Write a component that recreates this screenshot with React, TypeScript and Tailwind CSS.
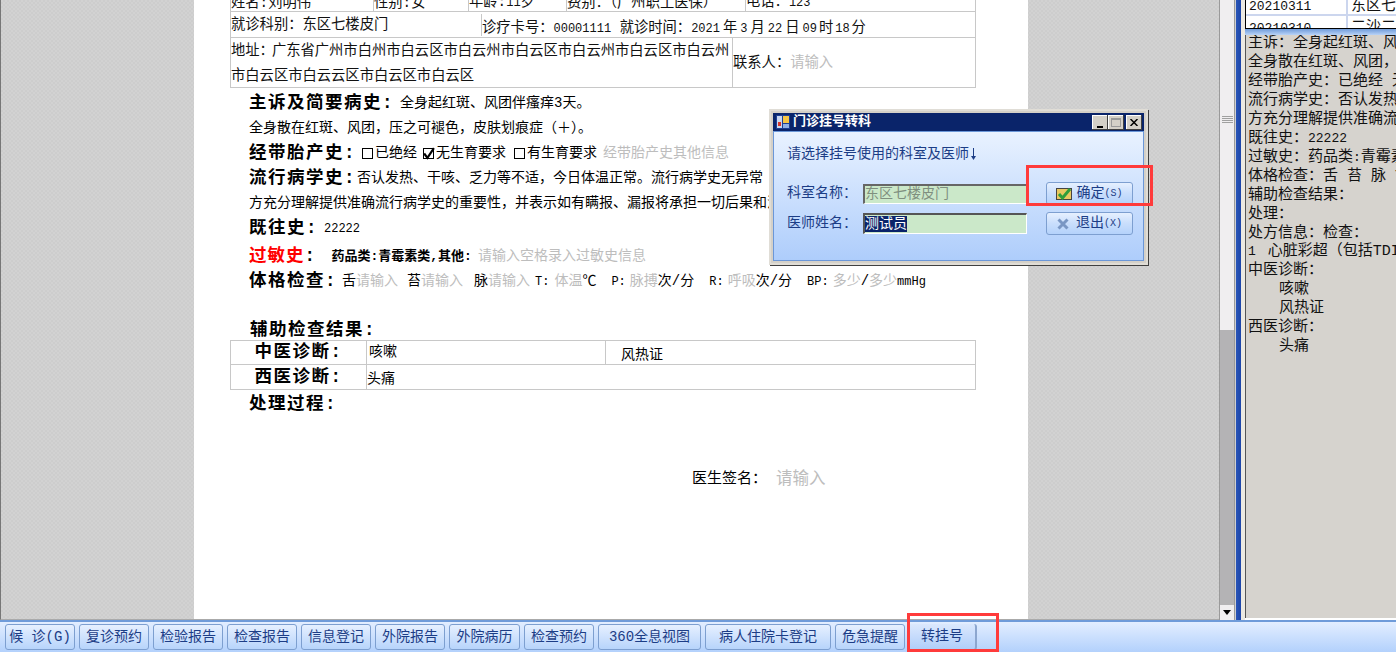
import type { ReactNode } from 'react';

// 门诊挂号转科 — old WinForms style clinic screen

const bottomButtons = [
  { label: '候 诊(G)', w: 'w-[70px]' },
  { label: '复诊预约', w: 'w-[70px]' },
  { label: '检验报告', w: 'w-[70px]' },
  { label: '检查报告', w: 'w-[70px]' },
  { label: '信息登记', w: 'w-[70px]' },
  { label: '外院报告', w: 'w-[70px]' },
  { label: '外院病历', w: 'w-[71px]' },
  { label: '检查预约', w: 'w-[70px]' },
  { label: '360全息视图', w: 'w-[103px]' },
  { label: '病人住院卡登记', w: 'w-[126px]' },
  { label: '危急提醒', w: 'w-[70px]' },
];

const sideLines: { id: string; text: ReactNode; indent?: boolean }[] = [
  { id: 'zs', text: '主诉：全身起红斑、风团伴瘙痒3天。' },
  { id: 'ss', text: '全身散在红斑、风团，压之可褪色' },
  { id: 'jd', text: '经带胎产史：已绝经 无生育要求' },
  { id: 'lx', text: '流行病学史：否认发热、干咳、乏力' },
  { id: 'ff', text: '方充分理解提供准确流行病学史的重要性' },
  { id: 'jw', text: <>既往史：<span className="text-[13px]">22222</span></> },
  { id: 'gm', text: <>过敏史：药品类<span className="text-[13px]">:</span>青霉素类</> },
  { id: 'tg', text: '体格检查：舌 苔 脉 T：体温' },
  { id: 'fz', text: '辅助检查结果：' },
  { id: 'cl', text: '处理：' },
  { id: 'cf', text: '处方信息：检查：' },
  { id: 'xz', text: <><span className="mr-[12px] text-[13px]">1</span>心脏彩超（包括TDI）</> },
  { id: 'zy', text: '中医诊断：' },
  { id: 'ks', text: '咳嗽', indent: true },
  { id: 'fr', text: '风热证', indent: true },
  { id: 'xy', text: '西医诊断：' },
  { id: 'tt', text: '头痛', indent: true },
];

function Num({ children }: { children: ReactNode }) {
  return <span className="text-[12px]">{children}</span>;
}

function Hint({ children, className = '' }: { children: ReactNode; className?: string }) {
  return <span className={`text-[#bdbdbd] ${className}`}>{children}</span>;
}

function Heading({ children }: { children: ReactNode }) {
  return <span className="text-[17.5px] font-bold tracking-[1.5px] text-black">{children}</span>;
}

function Line({ children, className = '' }: { children: ReactNode; className?: string }) {
  return <div className={`flex h-[25px] items-center whitespace-pre text-[14px] text-black ${className}`}>{children}</div>;
}

function Box({ checked, className = 'ml-[6px]' }: { checked?: boolean; className?: string }) {
  return (
    <span className={`mr-[2px] inline-flex h-[11px] w-[11px] items-center justify-center border border-black ${className}`}>
      {checked && (
        <svg viewBox="0 0 12 12" className="h-[13px] w-[13px] overflow-visible">
          <path d="M2 6l3 4 6-9" fill="none" stroke="#000" strokeWidth="2" />
        </svg>
      )}
    </span>
  );
}

function Document() {
  return (
    <div className="h-full w-[834px] overflow-hidden bg-white pl-[36px]">
      <div className="w-[746px] border-x border-b border-[#c8c8c8] text-[14.3px] text-[#111]">
        <div className="flex h-[12px] items-end overflow-hidden border-b border-[#c8c8c8] leading-[14px] whitespace-nowrap">
          <div className="w-[142px] pb-[1px]">姓名:刘明伟</div>
          <div className="w-[95px] border-l border-[#c8c8c8] pb-[1px]">性别:女</div>
          <div className="w-[98px] border-l border-[#c8c8c8] pb-[1px]">年龄:<Num>11</Num>岁</div>
          <div className="w-[179px] border-l border-[#c8c8c8] pb-[1px]">费别：（广州职工医保）</div>
          <div className="flex-1 border-l border-[#c8c8c8] pb-[1px]">电话：<Num>123</Num></div>
        </div>
        <div className="flex h-[26px] items-center border-b border-[#c8c8c8] pt-[3px] whitespace-nowrap">
          <div className="w-[250px]">就诊科别：东区七楼皮门</div>
          <div className="-mt-[3px] h-full flex-1 border-l border-[#c8c8c8] pt-[2px] leading-[24px]">
            诊疗卡号：<Num>00001111</Num>&nbsp;就诊时间：<Num>2021</Num>
            <span className="mx-[3px]">年</span><Num>3</Num>
            <span className="mx-[3px]">月</span><Num>22</Num>
            <span className="mx-[3px]">日</span><Num>09</Num>
            <span className="mx-[2px]">时</span><Num>18</Num>
            <span className="ml-[2px]">分</span>
          </div>
        </div>
        <div className="flex h-[49px] items-center">
          <div className="w-[501px] pt-[3px] leading-[25px] whitespace-nowrap">
            <div>地址：<span className="-ml-[2px]">广东省广州市白州市白云区市白云州市白云区市白云州市白云区市白云州</span></div>
            <div>市白云区市白云云区市白云区市白云区</div>
          </div>
          <div className="flex h-full flex-1 items-center border-l border-[#c8c8c8] pt-[3px] whitespace-nowrap">
            联系人：<Hint>请输入</Hint>
          </div>
        </div>
      </div>

      <div className="pl-[19px]">
        <Line className="mt-[3px]"><Heading>主诉及简要病史:</Heading><span className="ml-[6px]">全身起红斑、风团伴瘙痒3天。</span></Line>
        <Line>全身散在红斑、风团，压之可褪色，皮肤划痕症（＋）。</Line>
        <Line>
          <Heading>经带胎产史:</Heading>
          <Box />已绝经<Box checked />无生育要求<Box className="ml-[8px]" />有生育要求
          <Hint className="ml-[6px]">经带胎产史其他信息</Hint>
        </Line>
        <Line><Heading>流行病学史:</Heading><span className="ml-[1px]">否认发热、干咳、乏力等不适，今日体温正常。流行病学史无异常</span></Line>
        <Line>方充分理解提供准确流行病学史的重要性，并表示如有瞒报、漏报将承担一切后果和法律责任</Line>
        <Line><Heading>既往史:</Heading><span className="ml-[6px] text-[12px]">22222</span></Line>
        <Line className="mt-[3px]">
          <span className="text-[17.5px] font-bold tracking-[1px] text-[#ff0000]">过敏史</span>
          <Heading>:</Heading>
          <span className="ml-[15px] text-[13px] font-bold">药品类:青霉素类,其他:</span>
          <Hint className="ml-[6px]">请输入空格录入过敏史信息</Hint>
        </Line>
        <Line>
          <Heading>体格检查:</Heading>
          <span className="ml-[5px]">舌</span><Hint>请输入</Hint>
          <span className="ml-[9px]">苔</span><Hint>请输入</Hint>
          <span className="ml-[11px]">脉</span><Hint>请输入</Hint>
          <Num><span className="ml-[5px]">T:</span></Num><Hint className="ml-[5px]">体温</Hint>℃
          <Num><span className="ml-[15px]">P:</span></Num><Hint className="ml-[4px]">脉搏</Hint>次/分
          <Num><span className="ml-[15px]">R:</span></Num><Hint className="ml-[4px]">呼吸</Hint>次/分
          <Num><span className="ml-[15px]">BP:</span></Num><Hint className="ml-[4px]">多少</Hint>/<Hint>多少</Hint>
          <Num>mmHg</Num>
        </Line>
        <div className="h-[26px]" />
        <div className="flex h-[20px] items-center pl-[1px]"><Heading>辅助检查结果:</Heading></div>
      </div>

      <div className="w-[746px] border border-[#c8c8c8] text-[14px] text-black">
        <div className="flex h-[24px] border-b border-[#c8c8c8]">
          <div className="flex w-[135px] items-center justify-center"><Heading>中医诊断:</Heading></div>
          <div className="w-[239px] border-l border-[#c8c8c8] pl-[2px] leading-[22px]">咳嗽</div>
          <div className="flex-1 border-l border-[#c8c8c8] pt-[5px] pl-[15px] leading-[18px]">风热证</div>
        </div>
        <div className="flex h-[24px]">
          <div className="flex w-[135px] items-center justify-center"><Heading>西医诊断:</Heading></div>
          <div className="flex-1 border-l border-[#c8c8c8] pt-[4px] leading-[20px]">头痛</div>
        </div>
      </div>

      <div className="pl-[19px]">
        <Line className="mt-[2px]"><Heading>处理过程:</Heading></Line>
        <div className="mt-[51px] flex h-[25px] items-center pl-[443px] text-[15px] whitespace-nowrap text-black">
          医生签名：<Hint className="ml-[9px] text-[16.5px]">请输入</Hint>
        </div>
      </div>
    </div>
  );
}

function Scrollbar() {
  return (
    <div className="flex h-full w-[16px] flex-col border-x border-[#9a9a9a] bg-[#b4b3b5]">
      <div className="flex h-[330px] flex-col items-center bg-[#f0eef0] pt-[116px]">
        <div className="flex w-[11px] flex-col gap-[1px]">
          <div className="h-px bg-[#a0a0a0]" />
          <div className="h-px bg-[#a0a0a0]" />
          <div className="h-px bg-[#a0a0a0]" />
          <div className="h-px bg-[#a0a0a0]" />
        </div>
      </div>
      <div className="flex-1" />
      <div className="flex h-[15px] items-center justify-center bg-[#f0eef0]">
        <svg viewBox="0 0 8 5" className="h-[5px] w-[8px]">
          <path d="M0 0h8L4 5z" fill="#000" />
        </svg>
      </div>
    </div>
  );
}

function SidePanel() {
  return (
    <div className="flex h-full flex-1 flex-col overflow-hidden border-b-2 border-white">
      <div className="h-[29px] overflow-hidden border-b border-l border-black bg-white text-[15px] text-[#111]">
        <div className="flex h-[16px] border-b-2 border-[#ccd6ee] leading-[13px] whitespace-nowrap">
          <div className="w-[100px] pl-[3px] text-[13px]">20210311</div>
          <div className="flex-1 border-l-2 border-[#ccd6ee] pl-[3px]">东区七</div>
        </div>
        <div className="flex h-[24px] whitespace-nowrap">
          <div className="w-[100px] pt-[6px] pl-[3px] text-[13px] leading-[14px]">20210310</div>
          <div className="flex-1 border-l-2 border-[#ccd6ee] pt-[5px] pl-[3px] leading-[14px]">二沙二</div>
        </div>
      </div>
      <div className="h-[6px] bg-gradient-to-b from-[#6f9bd9] to-[#b9d3f7]" />
      <div className="flex-1 overflow-hidden border-l border-[#555] bg-[#d6d3ce] pl-[2px] text-[15px] leading-[18.95px] whitespace-nowrap text-[#111]">
        {sideLines.map((line) => (
          <div key={line.id} className={line.indent ? 'pl-[31px]' : ''}>{line.text}</div>
        ))}
      </div>
    </div>
  );
}

function DialogButton({ icon, label, hotkey }: { icon: ReactNode; label: string; hotkey: string }) {
  return (
    <button className="flex h-[23px] w-[87px] items-center justify-center rounded-[3px] border border-[#7d9fd0] bg-gradient-to-b from-[#e6f0ff] via-[#c9defc] to-[#b4d2fb] text-[14px] text-[#1c3d86]">
      {icon}
      <span className="ml-[4px]">{label}</span>
      <span className="text-[10px]">({hotkey})</span>
    </button>
  );
}

function Dialog() {
  return (
    <div className="absolute top-[109px] left-[769px] flex h-[156px] w-[379px] flex-col border-2 border-[#e0ddd6] bg-[#d4d0c8] p-[2px] text-[14px] shadow-[1px_1px_0_#404040]">
      <div className="flex h-[18px] shrink-0 items-center justify-between bg-[#0a246a] pr-[2px] pl-[3px]">
        <div className="flex items-center gap-[3px] text-[13px] font-bold text-white">
          <svg viewBox="0 0 14 14" className="h-[14px] w-[14px]">
            <rect width="14" height="14" fill="#1c3f94" />
            <rect x="1" y="1" width="5" height="12" fill="#c9d6ef" />
            <rect x="2" y="7" width="3" height="4" fill="#d8352a" />
            <rect x="7" y="1" width="6" height="7" fill="#f6c544" />
            <rect x="7" y="9" width="6" height="4" fill="#8fb0e6" />
          </svg>
          门诊挂号转科
        </div>
        <div className="flex">
          <div className="flex h-[15px] w-[16px] items-end justify-center bg-[#d4d0c8] pb-[2px] shadow-[inset_-1px_-1px_0_#404040,inset_1px_1px_0_#fff]">
            <div className="h-[2px] w-[6px] bg-black" />
          </div>
          <div className="flex h-[15px] w-[16px] items-center justify-center bg-[#d4d0c8] shadow-[inset_-1px_-1px_0_#404040,inset_1px_1px_0_#fff]">
            <div className="h-[9px] w-[10px] border border-t-2 border-[#9a9a9a]" />
          </div>
          <div className="ml-[2px] flex h-[15px] w-[16px] items-center justify-center bg-[#d4d0c8] shadow-[inset_-1px_-1px_0_#404040,inset_1px_1px_0_#fff]">
            <svg viewBox="0 0 8 7" className="h-[7px] w-[8px]">
              <path d="M0.5 0l7 7M7.5 0l-7 7" stroke="#000" strokeWidth="1.5" />
            </svg>
          </div>
        </div>
      </div>
      <div className="flex-1 border border-[#6b97d8] bg-gradient-to-b from-[#e9f2ff] to-[#aecdfb] pt-[12px] pl-[13px] text-[#1c3d86]">
        <div className="flex h-[20px] items-center">
          请选择挂号使用的科室及医师
          <svg viewBox="0 0 7 14" className="ml-[1px] h-[14px] w-[7px]">
            <path d="M3.5 1v9" stroke="#1c3d86" strokeWidth="1" />
            <path d="M1 9h5L3.5 13z" fill="#1c3d86" />
          </svg>
        </div>
        <div className="mt-[18px] flex h-[23px] items-center">
          <div className="w-[76px]">科室名称：</div>
          <div className="flex h-[20px] w-[164px] items-center border-t-2 border-r border-b border-l-2 border-t-[#666] border-r-white border-b-white border-l-[#666] bg-[#cbe8c9] text-[14px] text-[#7f8f7f]">
            东区七楼皮门
          </div>
          <div className="ml-[19px]">
            <DialogButton
              label="确定"
              hotkey="S"
              icon={
                <svg viewBox="0 0 16 14" className="h-[14px] w-[16px]">
                  <rect x="0.5" y="1.5" width="15" height="11" fill="#e8c860" stroke="#444" />
                  <path d="M3 7l3.5 4L14 2" fill="none" stroke="#2f9e3a" strokeWidth="3" />
                </svg>
              }
            />
          </div>
        </div>
        <div className="mt-[7px] flex h-[23px] items-center">
          <div className="w-[76px]">医师姓名：</div>
          <div className="flex h-[21px] w-[164px] items-center border-t-2 border-r border-b border-l-2 border-t-[#555] border-r-white border-b-white border-l-[#555] bg-[#cbe8c9] text-[14px]">
            <span className="bg-[#0a246a] leading-[16px] text-white">测试员</span>
          </div>
          <div className="ml-[19px]">
            <DialogButton
              label="退出"
              hotkey="X"
              icon={
                <svg viewBox="0 0 12 12" className="mr-[3px] h-[12px] w-[12px]">
                  <path d="M1.5 1.5l9 9M10.5 1.5l-9 9" stroke="#7a97c4" strokeWidth="3" />
                </svg>
              }
            />
          </div>
        </div>
      </div>
    </div>
  );
}

function BottomBar() {
  return (
    <div className="flex h-[32px] gap-[4px] border-t-2 border-[#6f9bd9] bg-gradient-to-b from-[#e3eeff] to-[#b3d1fc] pt-[2px] pl-[5px] text-[14px] text-[#1c3d86]">
      {bottomButtons.map((b) => (
        <div
          key={b.label}
          className={`flex h-[26px] ${b.w} items-center justify-center rounded-[3px] border border-[#7d9fd0] bg-gradient-to-b from-[#e6f0ff] via-[#cfe2fd] to-[#b7d4fb] whitespace-nowrap`}
        >
          {b.label}
        </div>
      ))}
      <div className="flex h-[26px] w-[68px] items-center justify-center rounded-r-[3px] border-r-2 border-b border-[#8ca6cf] bg-gradient-to-b from-[#dbe8fd] to-[#b0cefa] whitespace-nowrap">
        转挂号
      </div>
    </div>
  );
}

export default function App() {
  return (
    <div className="relative flex h-[652px] w-[1396px] flex-col overflow-hidden bg-[#d0d0d0] font-['Liberation_Mono','Noto_Sans_CJK_SC',monospace]">
      <div className="flex h-[620px]">
        <div className="flex h-full w-[1219px] border-b border-l border-b-[#aaa] border-l-[#777] bg-[repeating-conic-gradient(#cdcdcd_0_25%,#d2d2d2_0_50%)] bg-[length:4px_4px] pl-[193px]">
          <Document />
        </div>
        <Scrollbar />
        <div className="ml-[1px] h-full w-[5px] bg-gradient-to-r from-[#2a55b8] to-[#1c45a8]" />
        <div className="w-[4px] bg-[#ece9e2]" />
        <SidePanel />
      </div>
      <BottomBar />

      <Dialog />

      {/* red marks drawn over the screenshot */}
      <div className="absolute top-[165px] left-[1026px] h-[41px] w-[127px] border-[3px] border-[#ff3b3b]" />
      <div className="absolute top-[613px] left-[907px] h-[39px] w-[92px] border-[3px] border-[#ff3b3b]" />
    </div>
  );
}
